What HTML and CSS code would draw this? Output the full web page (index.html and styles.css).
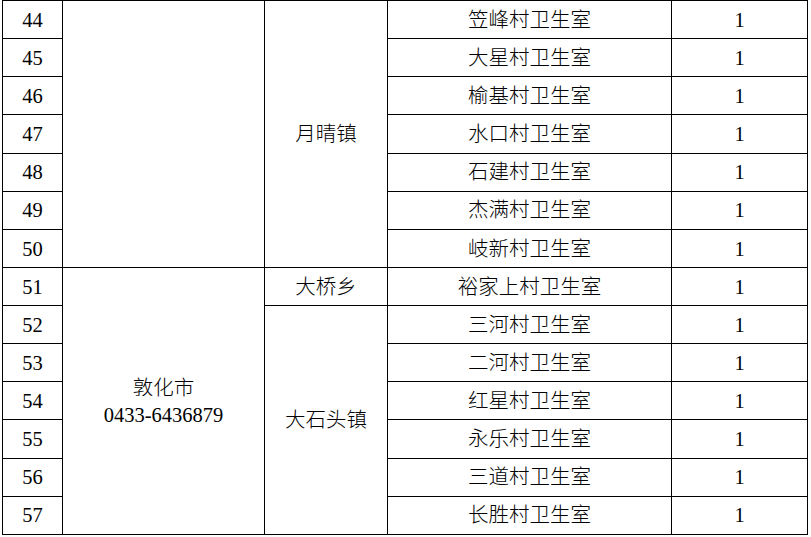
FILE: index.html
```html
<!DOCTYPE html>
<html lang="zh-CN">
<head>
<meta charset="utf-8">
<title>村卫生室名单</title>
<link rel="stylesheet" href="styles.css">
</head>
<body>
<table class="grid">
  <colgroup>
    <col class="c-no">
    <col class="c-city">
    <col class="c-town">
    <col class="c-clinic">
    <col class="c-count">
  </colgroup>
  <tbody>
    <tr><td>44</td><td rowspan="7"></td><td rowspan="7">月晴镇</td><td>笠峰村卫生室</td><td>1</td></tr>
    <tr><td>45</td><td>大星村卫生室</td><td>1</td></tr>
    <tr><td>46</td><td>榆基村卫生室</td><td>1</td></tr>
    <tr><td>47</td><td>水口村卫生室</td><td>1</td></tr>
    <tr><td>48</td><td>石建村卫生室</td><td>1</td></tr>
    <tr><td>49</td><td>杰满村卫生室</td><td>1</td></tr>
    <tr><td>50</td><td>岐新村卫生室</td><td>1</td></tr>
    <tr><td>51</td><td rowspan="7" class="city">敦化市<br>0433-6436879</td><td>大桥乡</td><td>裕家上村卫生室</td><td>1</td></tr>
    <tr><td>52</td><td rowspan="6">大石头镇</td><td>三河村卫生室</td><td>1</td></tr>
    <tr><td>53</td><td>二河村卫生室</td><td>1</td></tr>
    <tr><td>54</td><td>红星村卫生室</td><td>1</td></tr>
    <tr><td>55</td><td>永乐村卫生室</td><td>1</td></tr>
    <tr><td>56</td><td>三道村卫生室</td><td>1</td></tr>
    <tr><td>57</td><td>长胜村卫生室</td><td>1</td></tr>
  </tbody>
</table>
</body>
</html>
```

FILE: styles.css
```css
html, body {
  margin: 0;
  padding: 0;
  background: #fff;
}
body {
  padding: 0 0 0 2px;
}
.grid {
  border-collapse: collapse;
  table-layout: fixed;
  width: 806px;
  font-family: "Liberation Serif", "Noto Sans CJK SC", sans-serif;
  font-size: 20.5px;
  color: #000;
}
.c-no { width: 60px; }
.c-city { width: 202px; }
.c-town { width: 123px; }
.c-clinic { width: 284px; }
.c-count { width: 136px; }
.grid td {
  border: 1.5px solid #000;
  height: 35.14px;
  padding: 2px 0 0;
  text-align: center;
  vertical-align: middle;
  line-height: 1.25;
  white-space: nowrap;
  font-weight: 300;
}
.grid td.city {
  line-height: 27px;
}
```
